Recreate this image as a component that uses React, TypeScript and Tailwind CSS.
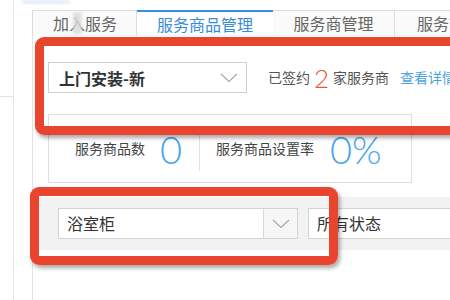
import React from "react"

const cjk = { fontFamily: '"Noto Sans CJK SC", "Noto Sans", sans-serif' }
const light = { fontFamily: "Lato, sans-serif", fontWeight: 300 }

function Chevron({ className }: { className?: string }) {
  return (
    <svg className={className} width="18" height="10" viewBox="0 0 18 10" fill="none">
      <path d="M1 1l8 7.5L17 1" stroke="#a8a8a8" strokeWidth="1.2" />
    </svg>
  )
}

export default function App() {
  return (
    <div className="relative w-[450px] h-[300px] overflow-hidden bg-white flex" style={cjk}>
      {/* left gutter */}
      <div className="w-[14px] shrink-0 h-full border-r border-[#e6e6e6] flex flex-col">
        <div className="mt-[96px] h-px bg-[#e3e3e3]" />
      </div>
      <div className="w-[18px] shrink-0" />

      {/* main panel */}
      <div className="flex-1 min-w-0 overflow-hidden pt-[10px] flex flex-col">
        {/* tabs */}
        <div className="flex h-[26px] text-[16px] leading-[24px] text-[#666]">
          <div className="w-[105px] shrink-0 border border-b-0 border-[#dcdcdc] bg-[#fafafa] pl-[20px]">加入服务</div>
          <div className="w-[136px] shrink-0 border-t-2 border-[#3a8ee6] bg-white text-center text-[#3b8ad6]">服务商品管理</div>
          <div className="w-[122px] shrink-0 border border-l-0 border-b-0 border-[#dcdcdc] bg-[#fafafa] text-center">服务商管理</div>
          <div className="w-[80px] shrink-0 border-t border-[#dcdcdc] bg-[#fafafa] pl-[22px] whitespace-nowrap">服务市场</div>
        </div>

        <div className="flex-1 border-l border-[#e3e3e3] flex flex-col">
          {/* provider row */}
          <div className="mt-[26px] pl-[15px] flex items-center h-[31px]">
            <div className="w-[199px] shrink-0 h-[31px] border border-[#cfcfcf] flex items-center justify-between pl-[10px] pr-[8px]">
              <span className="text-[16px] font-semibold text-[#333]">上门安装-新</span>
              <Chevron />
            </div>
            <div className="ml-[21px] flex items-center text-[14px] text-[#555] whitespace-nowrap">
              <span>已签约</span>
              <span className="mx-[4px] text-[26px] leading-none text-[#e8552d]" style={light}>2</span>
              <span>家服务商</span>
              <span className="ml-[11px] text-[#4aa3e0]">查看详情</span>
            </div>
          </div>

          {/* stats */}
          <div className="mt-[21px] ml-[15px] w-[364px] shrink-0 h-[69px] border border-[#dedede] flex items-center">
            <div className="w-[150px] shrink-0 flex items-center pl-[26px] text-[14px] text-[#444]">
              <span className="whitespace-nowrap">服务商品数</span>
              <span className="ml-[15px] text-[38px] leading-none text-[#45a6ec]" style={light}>0</span>
            </div>
            <div className="w-px h-[44px] bg-[#e3e3e3]" />
            <div className="flex items-center pl-[16px] text-[14px] text-[#444]">
              <span className="whitespace-nowrap">服务商品设置率</span>
              <span className="ml-[16px] text-[38px] leading-none text-[#45a6ec]" style={light}>0%</span>
            </div>
          </div>

          {/* filter bar */}
          <div className="mt-[14px] h-[53px] bg-[#f2f2f2] flex items-center pl-[25px]">
            <div className="w-[240px] shrink-0 h-[31px] border border-[#d3d3d3] bg-white flex">
              <span className="flex-1 pl-[8px] text-[16px] leading-[29px] text-[#333]">浴室柜</span>
              <div className="w-[34px] border-l border-[#d8d8d8] bg-[#f6f6f6] flex items-center justify-center">
                <Chevron />
              </div>
            </div>
            <div className="ml-[10px] w-[160px] shrink-0 h-[31px] border border-[#d3d3d3] bg-white pl-[8px] text-[16px] leading-[29px] text-[#333] whitespace-nowrap">所有状态</div>
          </div>
        </div>
      </div>

      {/* smudges */}
      <div className="absolute left-[22px] top-0 w-[48px] h-[4px] bg-[#e6eef9] blur-[1px]" />
      <div className="absolute left-[73px] top-[12px] w-[9px] h-[22px] bg-[#dcdcdc] opacity-80 blur-[1px]" />

      {/* red annotation boxes */}
      <div className="absolute left-[35px] top-[37px] w-[430px] h-[98px] border-[9px] border-[#e8442e] rounded-[9px] shadow-[2px_3px_4px_rgba(0,0,0,0.35)]" />
      <div className="absolute left-[30px] top-[187px] w-[308px] h-[78px] border-[9px] border-[#e8442e] rounded-[9px] shadow-[2px_3px_4px_rgba(0,0,0,0.35)]" />
    </div>
  )
}
